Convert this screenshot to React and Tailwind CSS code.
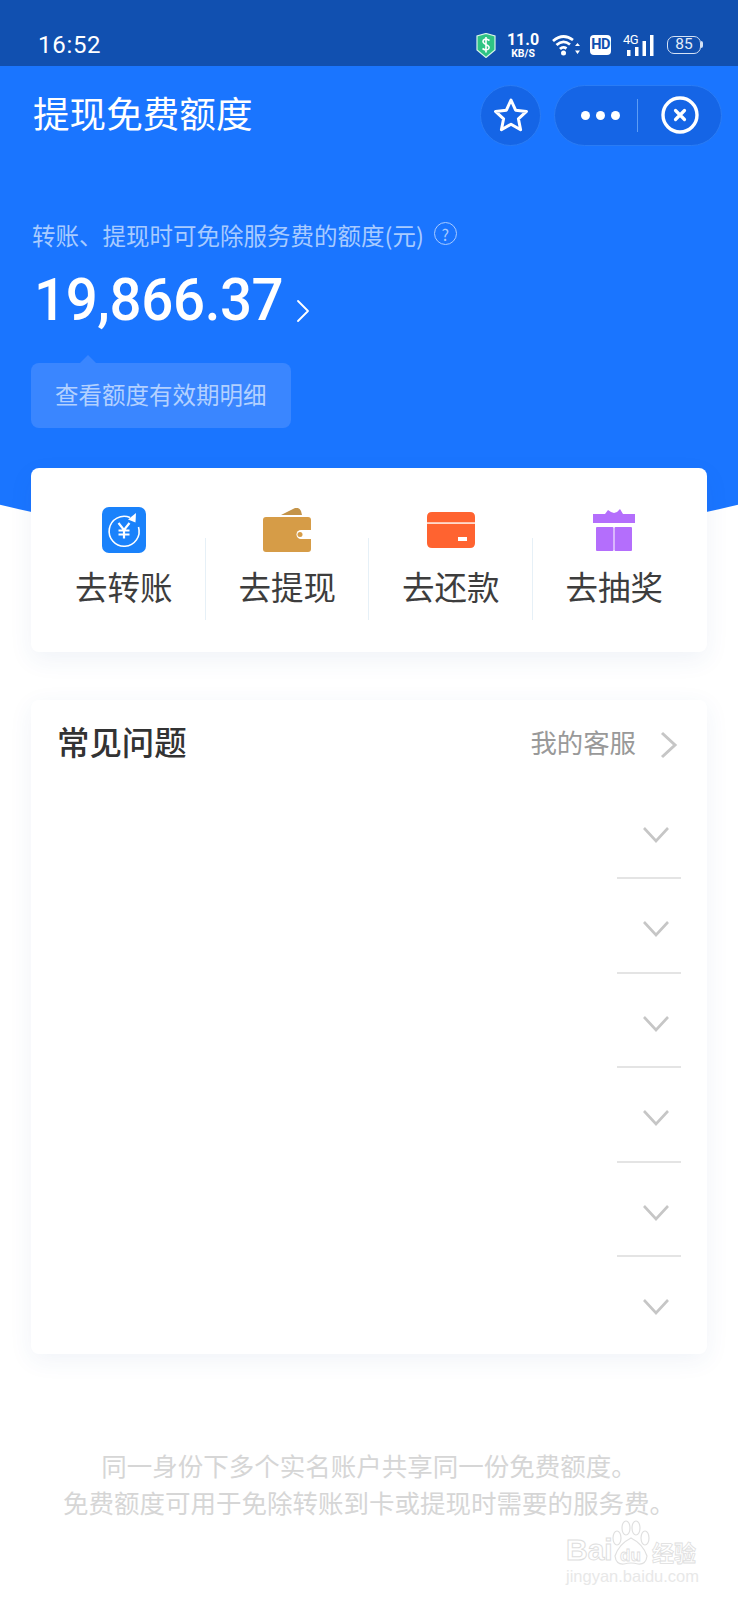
import { ChevronRight } from 'lucide-react';

const CJK = "font-['Noto_Sans_CJK_SC','Noto_Sans',sans-serif]";

const TransferIcon = () => (
    <svg width="46" height="46" viewBox="0 0 46 46">
        <rect x="1" y="0" width="44" height="46" rx="7" fill="#1a82fb" />
        <path d="M29 10.5A15 15 0 1 0 37.5 20" fill="none" stroke="#fff" strokeWidth="1.6" />
        <path d="M35 6 L27 12.5 L34.5 15.5 Z" fill="#fff" />
        <path d="M17.5 16 L23 23 L28.5 16 M23 23 V31.5 M17.5 23.5 H28.5 M17.5 27.5 H28.5" fill="none" stroke="#fff" strokeWidth="2.2" />
    </svg>
);

const WalletIcon = () => (
    <svg width="48" height="44" viewBox="0 0 48 44">
        <path d="M18 7 L32 0 Q36 -1 38 3 L39 7 Z" fill="#c4944a" />
        <rect x="0" y="9" width="48" height="35" rx="3" fill="#d69c47" />
        <path d="M48 22 H38 A4.5 4.5 0 0 0 38 31 H48 Z" fill="#fff" />
        <circle cx="37" cy="26.5" r="2.5" fill="#d69c47" />
    </svg>
);

const CardIcon = () => (
    <svg width="48" height="36" viewBox="0 0 48 36">
        <path d="M5 0 H43 Q48 0 48 5 V10.5 H0 V5 Q0 0 5 0 Z" fill="#ff6330" />
        <rect x="0" y="10.5" width="48" height="1.5" fill="#ffd9cb" />
        <path d="M0 12 H48 V31 Q48 36 43 36 H5 Q0 36 0 31 Z" fill="#ff6330" />
        <rect x="31" y="25" width="9" height="4" fill="#fff" />
    </svg>
);

const GiftIcon = () => (
    <svg width="42" height="42" viewBox="0 0 42 42">
        <path d="M12 5 L15 1 L18 3 L21 4 L24 3 L27 0 L30 5 Z" fill="#b46efc" />
        <rect x="0" y="5" width="42" height="9" fill="#b46efc" />
        <rect x="3" y="18" width="17.5" height="24" rx="1" fill="#b46efc" />
        <rect x="21.5" y="18" width="17.5" height="24" rx="1" fill="#b46efc" />
    </svg>
);

const actions = [
    { label: '去转账', icon: <TransferIcon /> },
    { label: '去提现', icon: <WalletIcon /> },
    { label: '去还款', icon: <CardIcon /> },
    { label: '去抽奖', icon: <GiftIcon /> },
];

const StatusIcons = () => (
    <div className="flex items-center">
        <svg width="20" height="25" viewBox="0 0 20 25" className="ml-[1px]">
            <path d="M10 0.5 L19 3 V17 L10 24.5 L1 17 V3 Z" fill="#2fc484" stroke="#d8f5e8" strokeWidth="1.2" />
            <path d="M13.5 7.5 Q10 5 7.5 7 Q5.8 9.5 10 11.5 Q14.5 13.5 12.5 16 Q10 18 6.5 15.5 M10 4 V19.5" fill="none" stroke="#fff" strokeWidth="1.6" />
        </svg>
        <div className="ml-[10px] w-[34px] flex flex-col items-center text-white font-['Roboto',sans-serif] font-bold">
            <span className="text-[16px] leading-[15px]">11.0</span>
            <span className="text-[10.5px] leading-[11px] mt-[1px]">KB/S</span>
        </div>
        <svg width="29" height="21" viewBox="0 0 29 21" className="ml-[12px]">
            <path d="M1 6 Q11 -2.5 21 5 M4.5 10 Q11 4 18 9.5 M8 14 Q11 11 14.5 13.5" fill="none" stroke="#fff" strokeWidth="2.8" />
            <circle cx="11.5" cy="18" r="2.5" fill="#fff" />
            <path d="M23 11 L25.5 8 L28 11 Z M23 15.5 L25.5 19 L28 15.5 Z" fill="#fff" />
        </svg>
        <div className="ml-[9px] w-[21px] h-[20px] rounded-[4px] bg-white flex items-center justify-center text-[#1150b0] text-[14.5px] tracking-[-0.5px] leading-none font-bold font-['Roboto',sans-serif]">
            HD
        </div>
        <div className="relative ml-[12px] w-[31px] h-[21px]">
            <span className="absolute left-0 -top-[2px] text-white text-[13px] tracking-[-0.5px] leading-[14px] font-['Roboto',sans-serif]">4G</span>
            <svg width="31" height="21" viewBox="0 0 31 21" className="absolute inset-0">
                <rect x="4" y="15" width="3.5" height="6" fill="#fff" />
                <rect x="12" y="12" width="3.5" height="9" fill="#fff" />
                <rect x="19.5" y="6" width="3.5" height="15" fill="#fff" />
                <rect x="27" y="0" width="3.5" height="21" fill="#fff" />
            </svg>
        </div>
        <div className="relative ml-[13px] mr-[37px] w-[34px] h-[18px] rounded-[7px] border-[1.5px] border-[#d5e2f5] flex items-center justify-center text-[#e3ecf9] text-[15.5px] leading-none font-['Roboto',sans-serif]">
            85
            <span className="absolute -right-[3px] top-[4px] w-[2px] h-[7px] rounded-r-[2px] bg-[#d5e2f5]" />
        </div>
    </div>
);

const App = () => {
    return (
        <div className={`${CJK} relative w-[738px] h-[1600px] overflow-hidden bg-white`}>

            {/* status bar */}
            <div className="h-[66px] pt-[24px] bg-[#1150b0] flex items-start justify-between">
                <span className="ml-[38px] h-[42px] flex items-center text-white text-[24px] tracking-[0.7px] font-['Roboto',sans-serif]">16:52</span>
                <div className="h-[42px] flex items-center"><StatusIcons /></div>
            </div>

            {/* blue hero with curved bottom */}
            <div className="h-[482px] bg-[#1a75ff] [clip-path:circle(1600px_at_50%_-1118px)]">
                <div className="h-[98px] flex items-center">
                    <h1 className="ml-[33px] -mt-[4px] text-[36.6px] leading-[50px] font-normal text-white">提现免费额度</h1>
                    <div className="ml-auto w-[61px] h-[61px] rounded-full bg-[#1565e6] border border-[#2a7cf5] flex items-center justify-center">
                        <svg width="36" height="36" viewBox="0 0 36 36">
                            <path d="M18 3 L22.6 13.2 L33.5 14.4 L25.4 21.8 L27.6 32.8 L18 27.2 L8.4 32.8 L10.6 21.8 L2.5 14.4 L13.4 13.2 Z" fill="none" stroke="#fff" strokeWidth="3" strokeLinejoin="round" />
                        </svg>
                    </div>
                    <div className="ml-[13px] mr-[16px] w-[168px] h-[61px] rounded-full bg-[#1565e6] border border-[#2a7cf5] flex items-center">
                        <div className="ml-[26px] flex gap-[6px]">
                            <span className="w-[9px] h-[9px] rounded-full bg-white" />
                            <span className="w-[9px] h-[9px] rounded-full bg-white" />
                            <span className="w-[9px] h-[9px] rounded-full bg-white" />
                        </div>
                        <div className="ml-[17px] w-px h-[33px] bg-[#5d9df5]" />
                        <svg width="38" height="38" viewBox="0 0 38 38" className="ml-[23px]">
                            <circle cx="19" cy="19" r="17" fill="none" stroke="#fff" strokeWidth="3.4" />
                            <path d="M14.5 14.5 L23.5 23.5 M23.5 14.5 L14.5 23.5" stroke="#fff" strokeWidth="3.2" strokeLinecap="round" />
                        </svg>
                    </div>
                </div>

                <div className="mt-[54px] ml-[32px] flex items-center text-[23.5px] leading-[34px] text-[#a8cbff]">
                    <span>转账、提现时可免除服务费的额度(元)</span>
                    <span className="ml-[10px] -mt-[3px] w-[23px] h-[23px] rounded-full border-[1.5px] border-[#a8cbff] flex items-center justify-center text-[16px] leading-none">?</span>
                </div>

                <div className="mt-[13px] ml-[34px] h-[70px] flex items-center text-white">
                    <span className="origin-left scale-x-[0.94] -mr-[16px] text-[60px] leading-[70px] font-medium tracking-[-0.4px] font-['Roboto',sans-serif]">19,866.37</span>
                    <ChevronRight size={40} strokeWidth={1.1} className="mt-[22px] text-white" />
                </div>

                <div className="relative mt-[28px] ml-[31px] w-[260px] h-[65px] pb-[1px] rounded-[8px] bg-[#3a86ff] flex items-center pl-[24px] text-[23.5px] text-[#b3d1ff]">
                    <span className="absolute left-[49px] -top-[8px] w-0 h-0 border-x-[8px] border-x-transparent border-b-[8px] border-b-[#3a86ff]" />
                    查看额度有效期明细
                </div>
            </div>

            {/* shortcut card */}
            <div className="relative -mt-[80px] mx-[31px] h-[184px] rounded-[8px] bg-white px-[11px] shadow-[0_8px_24px_rgba(40,80,160,0.07)] grid grid-cols-4">
                {actions.map((action, i) => (
                    <div key={action.label} className="relative flex flex-col items-center">
                        {i > 0 && <span className="absolute -left-[1px] top-[70px] w-px h-[82px] bg-[#e6f0f7]" />}
                        <div className="mt-[37px] h-[50px] flex items-center justify-center">{action.icon}</div>
                        <span className="mt-[9px] text-[32.5px] leading-[44px] text-[#3d3d3d]">{action.label}</span>
                    </div>
                ))}
            </div>

            {/* faq card */}
            <div className="relative mt-[48px] mx-[31px] h-[654px] rounded-[8px] bg-white shadow-[0_6px_24px_rgba(40,80,160,0.07)]">
                <div className="h-[85px] pb-[4px] flex items-center">
                    <h2 className="ml-[26px] text-[32.4px] leading-[44px] font-medium text-[#333]">常见问题</h2>
                    <span className="ml-auto mt-[3px] text-[26.4px] text-[#999]">我的客服</span>
                    <svg width="18" height="28" viewBox="0 0 18 28" className="ml-[24px] mr-[29px] mt-[8px]">
                        <path d="M2 2 L15 14 L2 26" fill="none" stroke="#c6c6c6" strokeWidth="3" />
                    </svg>
                </div>
                {[0, 1, 2, 3, 4, 5].map((i) => (
                    <div key={i} className="h-[94.4px] flex flex-col items-end pr-[26px]">
                        <svg width="28" height="18" viewBox="0 0 28 18" className="mt-[41px] mr-[11px]">
                            <path d="M2 2 L14 15 L26 2" fill="none" stroke="#c6c6c6" strokeWidth="2.6" />
                        </svg>
                        {i < 5 && <div className="mt-auto w-[64px] h-[2px] bg-[#e4e4e4]" />}
                    </div>
                ))}
            </div>

            {/* footer note */}
            <div className="mt-[92px] text-center text-[25.5px] leading-[37px] text-[#d6d6d6]">
                <p>同一身份下多个实名账户共享同一份免费额度。</p>
                <p>免费额度可用于免除转账到卡或提现时需要的服务费。</p>
            </div>

            {/* watermark */}
            <div className="absolute left-[566px] top-[1520px] w-[132px] h-[64px] text-white">
                <svg width="40" height="46" viewBox="0 0 40 46" className="absolute left-[45px] top-0">
                    <g fill="none" stroke="#e0e0e0" strokeWidth="1.2">
                        <ellipse cx="6" cy="18" rx="4" ry="7" />
                        <ellipse cx="15" cy="8" rx="4" ry="7" />
                        <ellipse cx="25" cy="8" rx="4" ry="7" />
                        <ellipse cx="34" cy="18" rx="4" ry="7" />
                        <path d="M20 18 Q8 24 4 36 Q5 45 13 44 Q20 42 27 44 Q35 45 36 36 Q32 24 20 18 Z" />
                    </g>
                </svg>
                <span className="absolute left-0 top-[14px] text-[30px] leading-[32px] font-bold font-['Liberation_Sans',sans-serif] [-webkit-text-stroke:1px_#dedede]">Bai</span>
                <span className="absolute left-[54px] top-[26px] text-[17px] leading-[20px] font-bold font-['Liberation_Sans',sans-serif] [-webkit-text-stroke:0.8px_#dedede]">du</span>
                <span className="absolute left-[86px] top-[17px] text-[22px] leading-[28px] font-bold [-webkit-text-stroke:0.8px_#dedede]">经验</span>
                <span className="absolute left-0 top-[46px] text-[16.5px] leading-[20px] text-[#e8e8e8] font-['Liberation_Sans',sans-serif]">jingyan.baidu.com</span>
            </div>
        </div>
    );
}

export default App;
